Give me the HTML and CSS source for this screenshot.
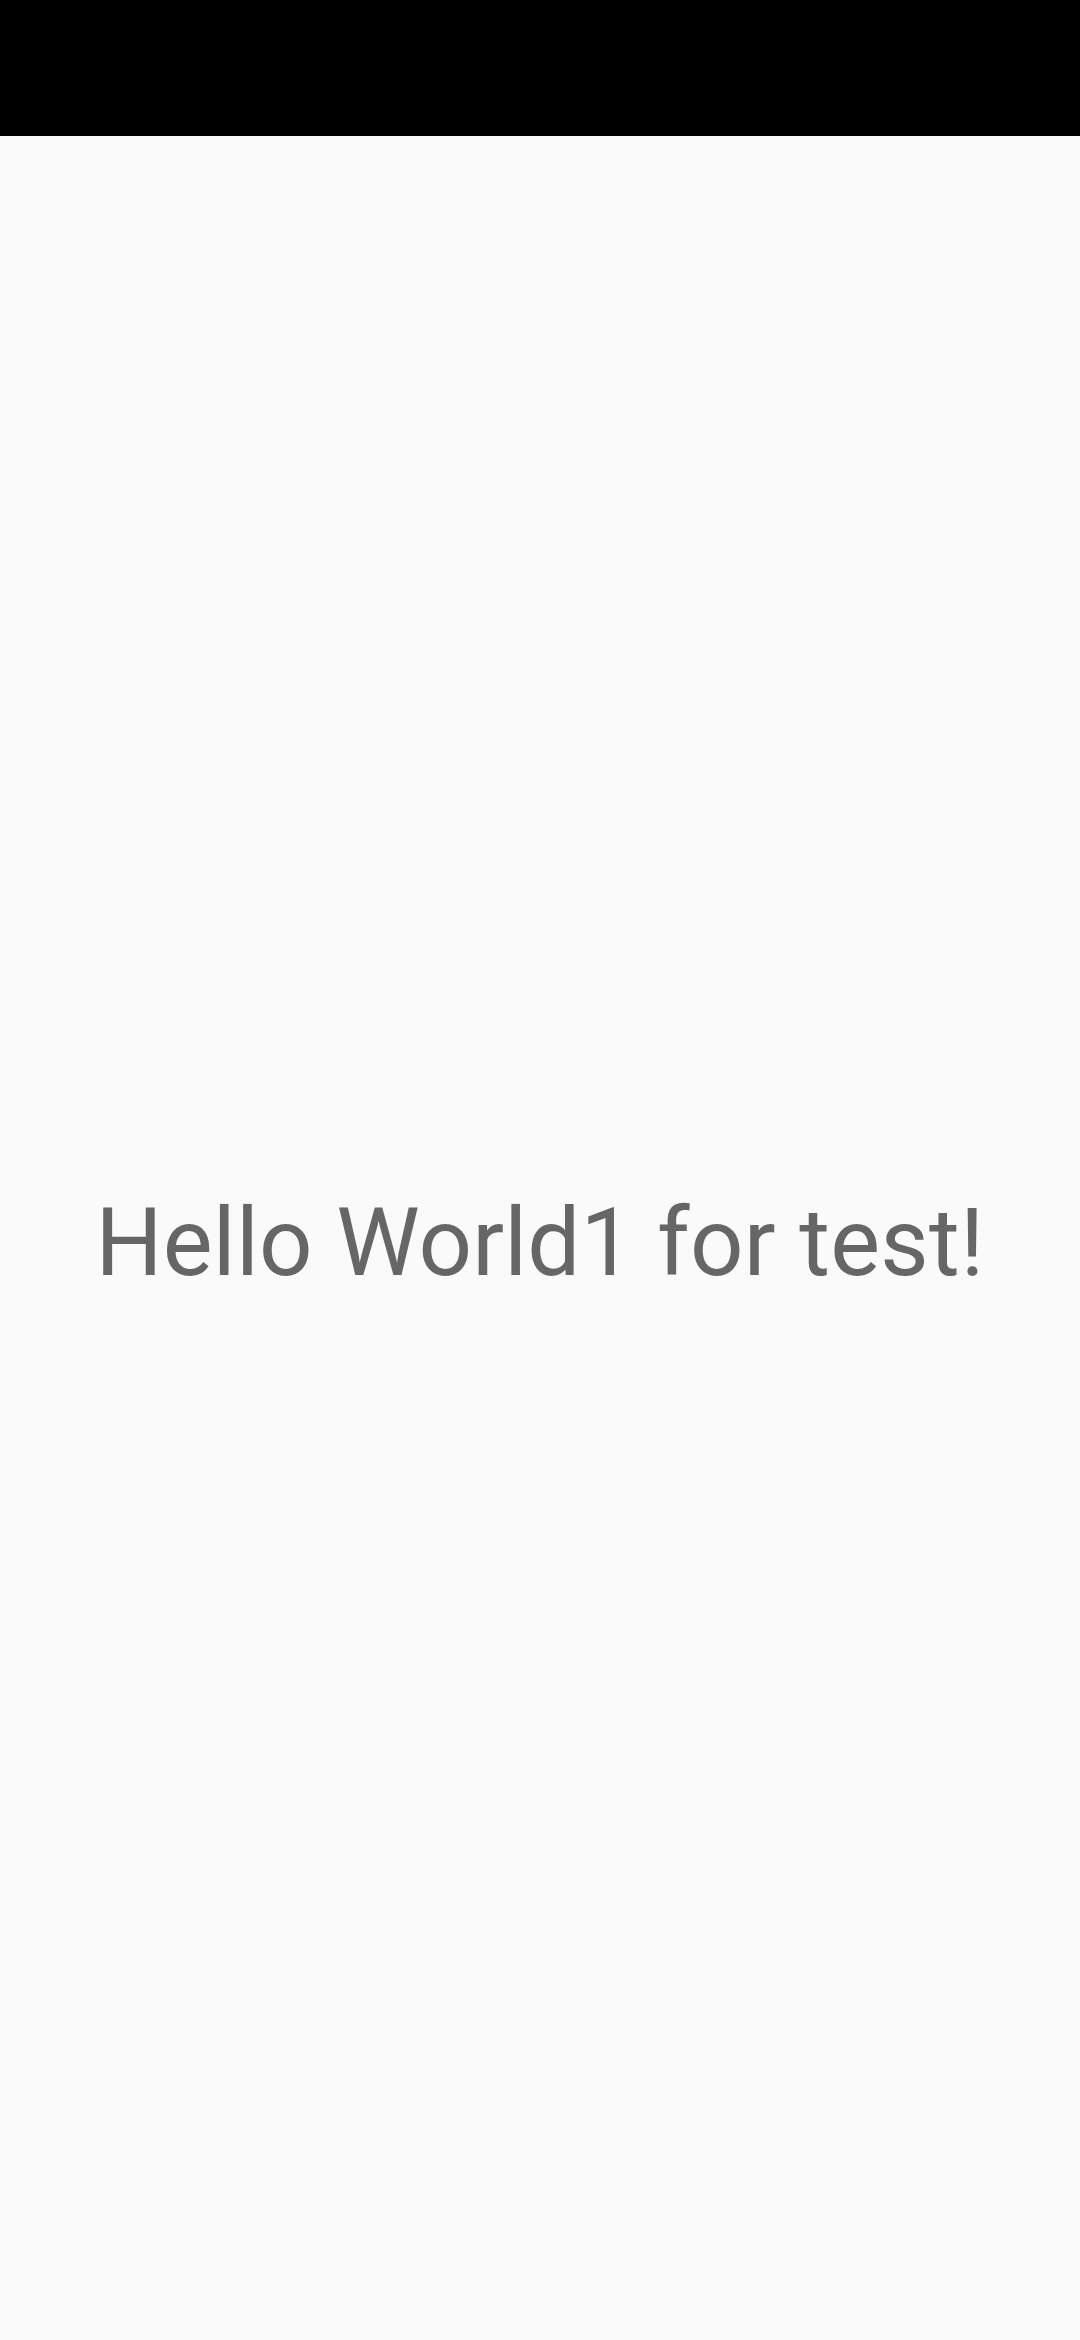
FILE: index.html
```html
<!DOCTYPE html>
<html>
<head>
<meta charset="utf-8">
<link rel="stylesheet" href="styles.css">
</head>
<body>
<div class="status-bar"></div>
<main class="content">
  <p class="greeting">Hello World1 for test!</p>
</main>
</body>
</html>
```
FILE: styles.css
```css
html, body {
  margin: 0;
  padding: 0;
  height: 100%;
}
body {
  display: flex;
  flex-direction: column;
  background: #fafafa;
  font-family: Roboto, "Noto Sans", sans-serif;
}
.status-bar {
  height: 136px;
  background: #000;
  flex: none;
}
.content {
  flex: 1;
  display: flex;
  align-items: center;
  justify-content: center;
  padding-top: 9px;
}
.greeting {
  margin: 0;
  font-size: 94px;
  letter-spacing: 0.2px;
  color: #666666;
  line-height: 1;
}
```
